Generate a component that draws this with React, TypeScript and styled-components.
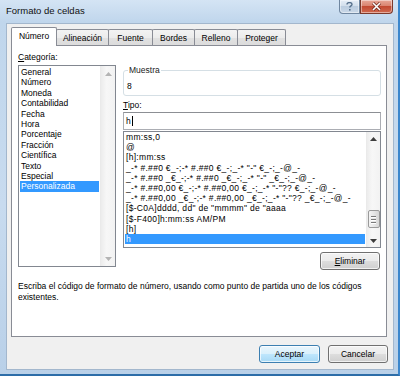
import styled, { createGlobalStyle } from "styled-components";

const GlobalStyle = createGlobalStyle`
  html, body { margin: 0; padding: 0; background: #fff; }
  body {
    font-family: "Liberation Sans", Arial, sans-serif;
    font-size: 8.5px;
    color: #000;
  }
  * { box-sizing: border-box; }
`;

const Window = styled.div`
  width: 400px;
  height: 376px;
  display: flex;
  flex-direction: column;
  padding: 0 4px 4px 6px;
  background: linear-gradient(180deg, #d4e4f4 0px, #c0d6ec 22px, #c8dbef 55%, #b9d0e8 100%);
  border-right: 2px solid #3b86cc;
  border-bottom: 2px solid #2d6da8;
`;

const TitleBar = styled.div`
  height: 23px;
  flex: none;
  display: flex;
  align-items: flex-start;
`;

const Title = styled.span`
  flex: 1;
  padding-top: 5px;
  font-size: 9.5px;
  color: #111;
`;

const Controls = styled.div`
  display: flex;
  margin-right: 1px;
`;

const CaptionButton = styled.div<{ $kind: "help" | "close" }>`
  width: ${(p) => (p.$kind === "close" ? 33 : 21)}px;
  height: 14px;
  display: flex;
  align-items: center;
  justify-content: center;
  border: 1px solid ${(p) => (p.$kind === "close" ? "#7d3a2c" : "#6f86a0")};
  border-top: none;
  border-radius: ${(p) => (p.$kind === "close" ? "0 0 4px 0" : "0 0 0 4px")};
  background: ${(p) =>
    p.$kind === "close"
      ? "linear-gradient(180deg, #e8a898 0%, #d98470 45%, #c24a32 50%, #d06a50 100%)"
      : "linear-gradient(180deg, #e6eef7 0%, #d3dfec 45%, #bccde0 50%, #c9d8e8 100%)"};
  box-shadow: inset 0 0 0 1px rgba(255, 255, 255, 0.45);
`;

const Client = styled.div`
  flex: 1;
  display: flex;
  flex-direction: column;
  background: #f0f0f0;
  border: 1px solid #a3b7cd;
  padding: 3px 6px 0 4px;
`;

const TabRow = styled.div`
  height: 18px;
  flex: none;
  display: flex;
  align-items: flex-end;
`;

const Tab = styled.div<{ $active?: boolean; $w: number }>`
  position: relative;
  z-index: ${(p) => (p.$active ? 1 : 0)};
  width: ${(p) => p.$w}px;
  height: ${(p) => (p.$active ? 19 : 16)}px;
  margin-bottom: ${(p) => (p.$active ? -1 : 0)}px;
  margin-left: -1px;
  &:first-child { margin-left: 0; }
  display: flex;
  align-items: center;
  justify-content: center;
  padding-bottom: ${(p) => (p.$active ? 2 : 0)}px;
  border: 1px solid #898c95;
  border-bottom: none;
  border-radius: 2px 2px 0 0;
  background: ${(p) =>
    p.$active ? "#fff" : "linear-gradient(180deg, #f3f3f3 0%, #ececec 50%, #e1e1e1 51%, #dcdcdc 100%)"};
  color: #000;
`;

const Panel = styled.div`
  height: 292px;
  flex: none;
  display: flex;
  flex-direction: column;
  background: #fff;
  border: 1px solid #898c95;
  padding: 6px 5px 0 6px;
`;

const Columns = styled.div`
  display: grid;
  grid-template-columns: 98px 1fr;
  column-gap: 7px;
`;

const Column = styled.div`
  display: flex;
  flex-direction: column;
`;

const Label = styled.div<{ $top?: number }>`
  line-height: 11px;
  margin-top: ${(p) => p.$top ?? 0}px;
  color: #000;
`;

const ListBox = styled.div<{ $h: number; $top: number }>`
  height: ${(p) => p.$h}px;
  margin-top: ${(p) => p.$top}px;
  display: flex;
  border: 1px solid #828790;
  background: #fff;
`;

const Items = styled.div<{ $padTop: number; $spacing?: number }>`
  flex: 1;
  min-width: 0;
  overflow: hidden;
  padding: ${(p) => p.$padTop}px 1px 0 1px;
  letter-spacing: ${(p) => p.$spacing ?? 0}px;
`;

const Item = styled.div<{ $selected?: boolean; $lh: number }>`
  height: ${(p) => p.$lh}px;
  line-height: ${(p) => p.$lh}px;
  padding-left: 1px;
  white-space: nowrap;
  overflow: hidden;
  background: ${(p) => (p.$selected ? "#3399ff" : "transparent")};
  color: ${(p) => (p.$selected ? "#fff" : "#000")};
`;

const ScrollBar = styled.div<{ $w: number }>`
  width: ${(p) => p.$w}px;
  flex: none;
  display: flex;
  flex-direction: column;
  background: linear-gradient(90deg, #ececec 0%, #f7f7f7 40%, #f2f2f2 100%);
  border-left: 1px solid #eaeaea;
`;

const ArrowButton = styled.div<{ $h: number }>`
  height: ${(p) => p.$h}px;
  flex: none;
  display: flex;
  align-items: center;
  justify-content: center;
`;

const Track = styled.div<{ $gap: number }>`
  flex: 1;
  display: flex;
  flex-direction: column;
  justify-content: flex-end;
  align-items: center;
  padding-bottom: ${(p) => p.$gap}px;
`;

const Thumb = styled.div`
  width: 12px;
  height: 18px;
  display: flex;
  flex-direction: column;
  align-items: center;
  justify-content: center;
  gap: 2px;
  border: 1px solid #9a9a9a;
  border-radius: 2px;
  background: linear-gradient(90deg, #f4f4f4 0%, #e6e6e6 50%, #d6d6d6 100%);
`;

const Grip = styled.span`
  width: 5px;
  height: 1px;
  background: #7a7a7a;
  box-shadow: 0 1px 0 #fff;
`;

const GroupBox = styled.fieldset`
  height: 31px;
  margin: 13px 0 0 0;
  padding: 0 0 0 3px;
  border: 1px solid #d5dfe5;
  border-radius: 3px;
  min-width: 0;
`;

const Legend = styled.legend`
  padding: 0 1px;
  margin-left: 1px;
  line-height: 11px;
  color: #222;
`;

const Sample = styled.div`
  margin-top: 5px;
  line-height: 11px;
`;

const TextInput = styled.div`
  height: 18px;
  margin-top: 1px;
  display: flex;
  align-items: center;
  padding-left: 2px;
  border: 1px solid #abadb3;
  border-top-color: #8c8f94;
  background: #fff;
`;

const Caret = styled.span`
  display: inline-block;
  width: 1px;
  height: 10px;
  margin-left: 1px;
  background: #000;
`;

const Button = styled.button<{ $w: number; $default?: boolean }>`
  width: ${(p) => p.$w}px;
  height: 18px;
  padding: 0;
  font: inherit;
  font-size: 8.5px;
  color: #000;
  border: 1px solid ${(p) => (p.$default ? "#3c7fb1" : "#707070")};
  border-radius: 3px;
  background: ${(p) =>
    p.$default
      ? "linear-gradient(180deg, #eaf6fd 0%, #d9f0fc 50%, #bee6fd 51%, #a7d9f5 100%)"
      : "linear-gradient(180deg, #f2f2f2 0%, #ebebeb 50%, #dddddd 51%, #cfcfcf 100%)"};
  box-shadow: inset 0 0 0 1px rgba(255, 255, 255, 0.7);
`;

const EliminarRow = styled.div`
  display: flex;
  justify-content: flex-end;
  margin-top: 4px;
  padding-right: 1px;
`;

const Description = styled.p`
  margin: 11px 0 0 0;
  line-height: 11px;
  color: #000;
`;

const ButtonRow = styled.div`
  display: flex;
  justify-content: flex-end;
  gap: 8px;
  margin-top: 8px;
  margin-right: -1px;
`;

function Arrow({ up, color }: { up?: boolean; color: string }) {
  return (
    <svg width="7" height="4" viewBox="0 0 7 4">
      <path d={up ? "M0 4 L3.5 0 L7 4 Z" : "M0 0 L3.5 4 L7 0 Z"} fill={color} />
    </svg>
  );
}

const categories = [
  "General",
  "Número",
  "Moneda",
  "Contabilidad",
  "Fecha",
  "Hora",
  "Porcentaje",
  "Fracción",
  "Científica",
  "Texto",
  "Especial",
  "Personalizada",
];

const codes = [
  "mm:ss,0",
  "@",
  "[h]:mm:ss",
  '_-* #.##0 €_-;-* #.##0 €_-;_-* "-" €_-;_-@_-',
  '_-* #.##0 _€_-;-* #.##0 _€_-;_-* "-" _€_-;_-@_-',
  '_-* #.##0,00 €_-;-* #.##0,00 €_-;_-* "-"?? €_-;_-@_-',
  '_-* #.##0,00 _€_-;-* #.##0,00 _€_-;_-* "-"?? _€_-;_-@_-',
  '[$-C0A]dddd, dd" de "mmmm" de "aaaa',
  "[$-F400]h:mm:ss AM/PM",
  "[h]",
  "h",
];

const tabs = [
  { name: "Número", w: 46 },
  { name: "Alineación", w: 53 },
  { name: "Fuente", w: 45 },
  { name: "Bordes", w: 43 },
  { name: "Relleno", w: 44 },
  { name: "Proteger", w: 49 },
];

export default function App() {
  return (
    <>
      <GlobalStyle />
      <Window>
        <TitleBar>
          <Title>Formato de celdas</Title>
          <Controls>
            <CaptionButton $kind="help">
              <svg width="7" height="9" viewBox="0 0 7 9">
                <path
                  d="M1 2.4 C1 1 2 0.6 3.5 0.6 C5 0.6 6 1.3 6 2.5 C6 3.9 3.8 4 3.8 5.6"
                  fill="none"
                  stroke="#56708c"
                  strokeWidth="1.4"
                />
                <rect x="3" y="7" width="1.6" height="1.6" fill="#56708c" />
              </svg>
            </CaptionButton>
            <CaptionButton $kind="close">
              <svg width="11" height="9" viewBox="0 0 11 9">
                <path d="M2 1 L9 8 M9 1 L2 8" stroke="#6e2a1e" strokeWidth="3" />
                <path d="M2 1 L9 8 M9 1 L2 8" stroke="#fff" strokeWidth="1.6" />
              </svg>
            </CaptionButton>
          </Controls>
        </TitleBar>

        <Client>
          <TabRow>
            {tabs.map((t, i) => (
              <Tab key={t.name} $w={t.w} $active={i === 0}>
                {t.name}
              </Tab>
            ))}
          </TabRow>

          <Panel>
            <Columns>
              <Column>
                <Label>
                  <u>C</u>ategoría:
                </Label>
                <ListBox $h={202} $top={2}>
                  <Items $padTop={1}>
                    {categories.map((c) => (
                      <Item key={c} $lh={10.4} $selected={c === "Personalizada"}>
                        {c}
                      </Item>
                    ))}
                  </Items>
                  <ScrollBar $w={15}>
                    <ArrowButton $h={15}>
                      <Arrow up color="#b4b4b4" />
                    </ArrowButton>
                    <Track $gap={0} />
                    <ArrowButton $h={15}>
                      <Arrow color="#b4b4b4" />
                    </ArrowButton>
                  </ScrollBar>
                </ListBox>
              </Column>

              <Column>
                <GroupBox>
                  <Legend>Muestra</Legend>
                  <Sample>8</Sample>
                </GroupBox>
                <Label $top={4}>
                  <u>T</u>ipo:
                </Label>
                <TextInput>
                  h<Caret />
                </TextInput>
                <ListBox $h={117} $top={1}>
                  <Items $padTop={0} $spacing={0.3}>
                    {codes.map((c, i) => (
                      <Item key={i} $lh={10.2} $selected={i === codes.length - 1}>
                        {c}
                      </Item>
                    ))}
                  </Items>
                  <ScrollBar $w={14}>
                    <ArrowButton $h={13}>
                      <Arrow up color="#3c3c3c" />
                    </ArrowButton>
                    <Track $gap={6}>
                      <Thumb>
                        <Grip />
                        <Grip />
                        <Grip />
                      </Thumb>
                    </Track>
                    <ArrowButton $h={13}>
                      <Arrow color="#3c3c3c" />
                    </ArrowButton>
                  </ScrollBar>
                </ListBox>
                <EliminarRow>
                  <Button $w={60}>
                    <u>E</u>liminar
                  </Button>
                </EliminarRow>
              </Column>
            </Columns>

            <Description>
              Escriba el código de formato de número, usando como punto de partida uno de los códigos
              <br />
              existentes.
            </Description>
          </Panel>

          <ButtonRow>
            <Button $w={61} $default>
              Aceptar
            </Button>
            <Button $w={60}>Cancelar</Button>
          </ButtonRow>
        </Client>
      </Window>
    </>
  );
}
